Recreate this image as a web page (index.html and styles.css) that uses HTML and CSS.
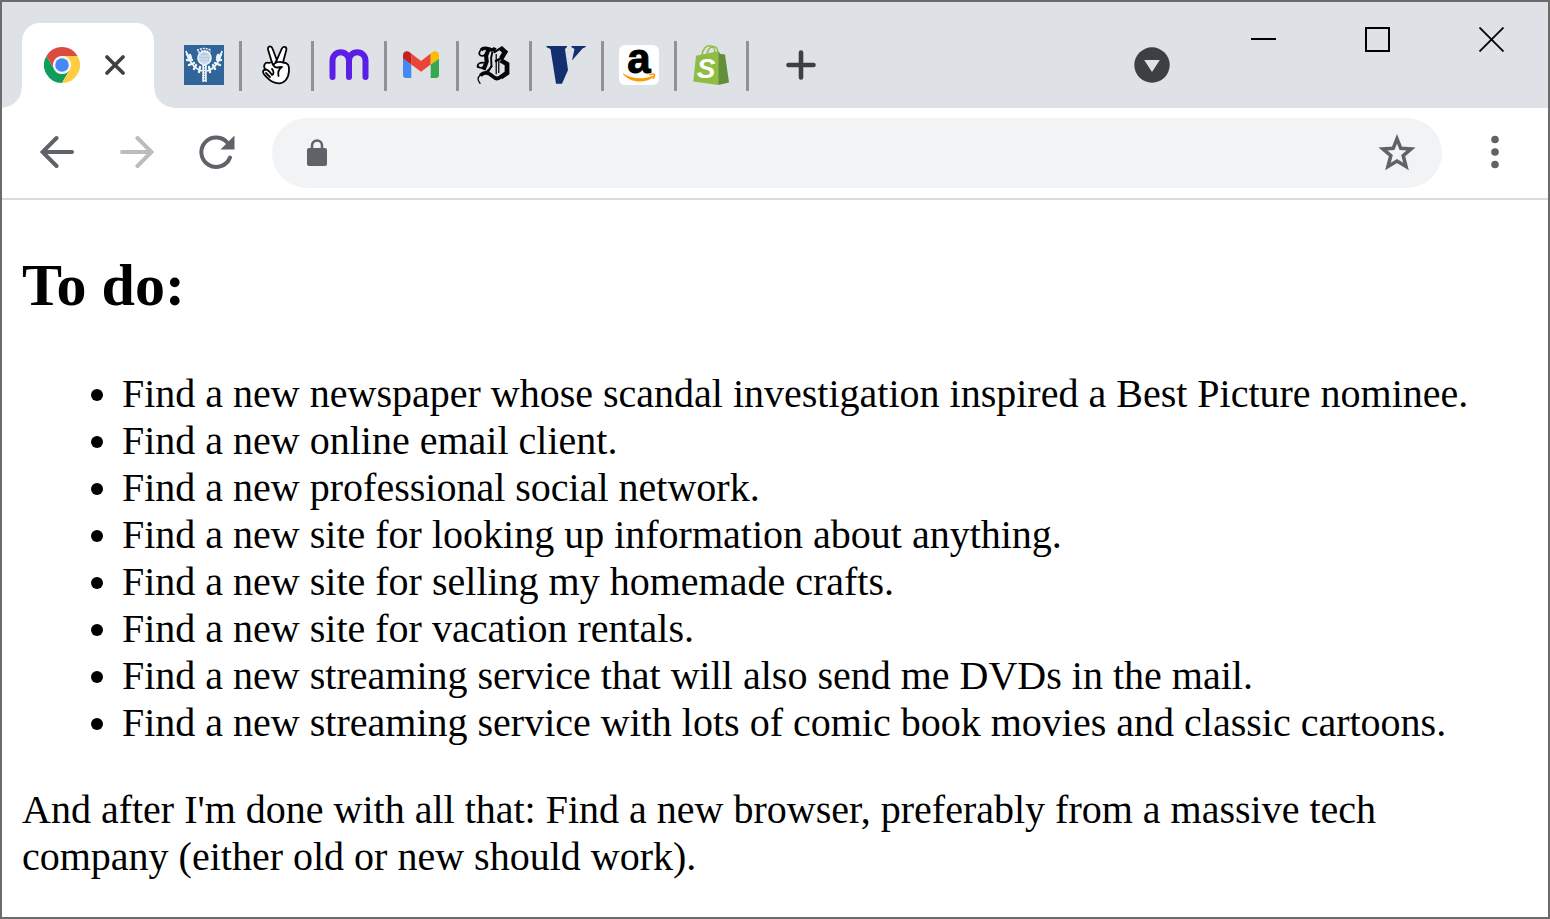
FILE: index.html
```html
<!DOCTYPE html>
<html lang="en">
<head>
<meta charset="utf-8">
<title>To do</title>
<link rel="stylesheet" href="styles.css">
</head>
<body>
<div class="window">
  <header class="tabstrip">
    <div class="tab-active">
      <svg class="chrome-icon" viewBox="0 0 48 48" aria-hidden="true">
        <path fill="#db4c3f" d="M24 12A12 12 0 0 0 13.6 30L3.2 12A24 24 0 0 1 44.8 12Z"/>
        <path fill="#109d59" d="M13.6 30A12 12 0 0 0 34.4 30L24 48A24 24 0 0 1 3.2 12Z"/>
        <path fill="#ffcd42" d="M24 12H44.8A24 24 0 0 1 24 48L34.4 30A12 12 0 0 0 24 12Z"/>
        <circle cx="24" cy="24" r="11.500" fill="#f1f1f1"/>
        <circle cx="24" cy="24" r="9" fill="#4587f4"/>
      </svg>
      <button class="tab-close" aria-label="Close tab">
        <svg width="20" height="20" viewBox="0 0 20 20"><path d="M2 2L18 18M18 2L2 18" stroke="#3c4043" stroke-width="3.600" stroke-linecap="round"/></svg>
      </button>
    </div>
    <nav class="tabs" aria-label="Tabs">
      <button class="tab" aria-label="Encyclopedia">
        <svg class="favicon" viewBox="0 0 40 40">
          <path fill="#316599" d="M0 0H40V40H0Z"/>
          <g fill="none" stroke="#eef3f8">
            <path stroke-width="1.500" stroke-dasharray="2 1" d="M13 5.500Q20 1.500 27.500 5.500M14 7.500Q20 4 26.500 7.500"/>
            <circle cx="20.500" cy="13" r="6.500" fill="#b9cde0" stroke-width="1.600"/>
            <path stroke-width="1" stroke-dasharray="1.500 1" d="M16 11H25M15 14H26M17 17H24"/>
            <path stroke-width="4.500" d="M20.500 19V37"/>
            <path stroke="#316599" stroke-width=".8" stroke-dasharray="1.500 1" d="M20.500 21V37"/>
            <path stroke-width="1.700" d="M18 26Q7 23 2 6M23 26Q34 23 38 6"/>
            <path stroke-width="2.400" stroke-linecap="round" d="M3 9L5 13M3 15L8 15M5 20L10 18M10 24L12 20M15 27L16 22M7 13L6 10M37 9L35 13M37 15L33 15M36 20L31 18M31 24L29 20M26 27L25 22M33 13L34 10"/>
          </g>
        </svg>
      </button>
      <button class="tab" aria-label="AngelList">
        <svg class="favicon" viewBox="0 0 40 40">
          <g stroke="#050505" stroke-width="1.800" stroke-linejoin="round" stroke-linecap="round">
            <path fill="#fff" d="M12 4.500C11.500 .5 15.500 .5 16.500 3.500L20.800 15L25.700 3.800C27 .7 31 1.500 30.300 5L27 17.500C32 18 33.500 20 33 26C32.500 34 28 38.500 22.500 38.300C16 38 13.500 35 9.500 31C6 28 6.500 25 9.500 24.500C6.500 21 9 16.500 13 18L15.800 17Z"/>
            <path fill="none" d="M15.800 17L17 20M20.800 15L19.500 17.500M27 17.500C24 16.500 21 17 18.500 18.500C16.500 20 18 22.500 21 22.500L26 22C23 24 21.500 27 22.500 31M9.500 24.500C12.500 24.500 14.500 28 16 30C18 29 18 26 16 24M10 28L14 32"/>
          </g>
        </svg>
      </button>
      <button class="tab" aria-label="Metro">
        <svg class="favicon" viewBox="0 0 40 40"><path fill="none" stroke="#5b1ee6" stroke-width="6" stroke-linecap="round" d="M3.500 32V15.500A8.200 8.200 0 0 1 20 15.500V32M20 15.500A8.200 8.200 0 0 1 36.500 15.500V32"/></svg>
      </button>
      <button class="tab" aria-label="Gmail">
        <svg class="favicon" viewBox="0 0 40 40">
          <path fill="#4589f5" d="M2 13.500L10.300 19.500V33H5A3 3 0 0 1 2 30Z"/>
          <path fill="#36a853" d="M38 13.500L29.700 19.500V33H35A3 3 0 0 0 38 30Z"/>
          <path fill="#ea4536" d="M10.300 8.500L20 16L29.700 8.500V19.500L20 26.700L10.300 19.500Z"/>
          <path fill="#c5221f" d="M2 13.500V10.200C2 6.300 6.200 5 9 7.400L10.300 8.500V19.500Z"/>
          <path fill="#fbbc05" d="M38 13.500V10.200C38 6.300 33.800 5 31 7.400L29.700 8.500V19.500Z"/>
        </svg>
      </button>
      <button class="tab" aria-label="Newspaper">
        <svg class="favicon" viewBox="0 0 126 126">
          <g fill="none" stroke="#050505">
            <path stroke-width="11" d="M22 16C32 5 44 12 54 15C60 17 64 13 66 8"/>
            <path stroke-width="5" d="M22 15C12 26 16 36 30 34L38 26M12 72C8 60 18 54 32 56"/>
            <path stroke-width="13" d="M45 16L38 34L40 52L30 78"/>
            <path stroke-width="6" d="M58 22L54 40L55 66L44 86M12 66C20 78 32 70 40 62"/>
            <path stroke-width="4" d="M70 28V92M78 44V88"/>
            <path stroke-width="15" d="M84 10L98 22L86 42M84 48L104 60V88L84 102"/>
            <path stroke-width="7" d="M62 24L90 6M66 52L92 38M70 108L108 84"/>
            <path stroke-width="12" d="M20 96C34 82 46 88 58 98C68 107 76 108 84 100"/>
            <path stroke-width="4" d="M22 92C8 104 12 112 20 122M38 84L58 66"/>
          </g>
        </svg>
      </button>
      <button class="tab" aria-label="News site">
        <svg class="favicon" viewBox="0 0 40 40"><path fill="#142f70" d="M.5 1H21V2L19 4L22 25L16 38.700H10L4.500 4L.5 2.200ZM25.500 1H39.700V2L36.500 3.500L26 15.500L28.500 4L25.500 2.200Z"/></svg>
      </button>
      <button class="tab" aria-label="Amazon">
        <svg class="favicon" viewBox="0 0 40 40">
          <rect width="40" height="40" rx="6" fill="#fff"/>
          <text class="amazon-a" x="20" y="28" text-anchor="middle">a</text>
          <path fill="#ff9900" d="M4 28.200C12 34 24 35 33.500 30.700C34.800 30.300 35.200 31.300 34 32.200C26 38.800 11 38 4 29Z"/>
          <path fill="none" stroke="#ff9900" stroke-width="1.500" d="M30 29.700C33 28.800 35.500 28.700 35.600 29.600C35.700 31 35 32.500 33.800 34"/>
        </svg>
      </button>
      <button class="tab" aria-label="Shopify">
        <svg class="favicon" viewBox="0 0 40 40">
          <path fill="none" stroke="#95bf47" stroke-width="1.500" d="M11 10C12 4 15 .8 18.500 .8C22 .8 24 4 24 8M16 9C17 4 20 1.800 22 1.500C25 1.300 26.500 4 27 7"/>
          <path fill="#8fbc42" d="M5 10.800L27.300 6.200V40L2.300 36.500Z"/>
          <path fill="#619038" d="M27.300 6.200L29.500 9L34 9.500L38 37.500L27.300 40Z"/>
          <text class="shopify-s" x="15" y="33" text-anchor="middle">S</text>
        </svg>
      </button>
    </nav>
    <button class="new-tab" aria-label="New tab">
      <svg width="30" height="30" viewBox="0 0 30 30"><path d="M15 2.500V27.500M2.500 15H27.500" stroke="#3c4043" stroke-width="4.600" stroke-linecap="round"/></svg>
    </button>
    <button class="tab-search" aria-label="Search tabs">
      <svg width="36" height="36" viewBox="0 0 36 36"><circle cx="18" cy="18" r="17.700" fill="#3c4043"/><path fill="#dee1e6" d="M10.200 13H25.800L18 25Z"/></svg>
    </button>
    <div class="window-controls">
      <button aria-label="Minimize"><svg width="25" height="25" viewBox="0 0 25 25"><path d="M0 11H25V13H0Z"/></svg></button>
      <button aria-label="Maximize"><svg width="25" height="25" viewBox="0 0 25 25"><path d="M1 1H24V24H1Z" fill="none" stroke="#000" stroke-width="2"/></svg></button>
      <button aria-label="Close"><svg width="25" height="25" viewBox="0 0 25 25"><path d="M.5 .5L24.500 24.500M24.500 .5L.5 24.500" stroke="#000" stroke-width="1.800"/></svg></button>
    </div>
  </header>
  <div class="toolbar">
    <button aria-label="Back"><svg width="34" height="34" viewBox="0 0 34 34"><path d="M32 17H3M16.500 3L2.500 17L16.500 31" fill="none" stroke="#5f6368" stroke-width="4" stroke-linecap="round" stroke-linejoin="miter"/></svg></button>
    <button aria-label="Forward"><svg width="34" height="34" viewBox="0 0 34 34"><path d="M2 17H31M17.500 3L31.500 17L17.500 31" fill="none" stroke="#babcbe" stroke-width="4" stroke-linecap="round" stroke-linejoin="miter"/></svg></button>
    <button aria-label="Reload"><svg width="36" height="36" viewBox="0 0 36 36"><path d="M29 9.300A14.800 14.800 0 1 0 31 23.500" fill="none" stroke="#5f6368" stroke-width="4" stroke-linecap="round"/><path d="M35.500 1.500V15.500H21.500Z" fill="#5f6368"/></svg></button>
    <div class="omnibox">
      <svg width="20" height="28" viewBox="0 0 20 28" aria-hidden="true"><rect y="9" width="20" height="18" rx="2" fill="#5f6368"/><path d="M5 10V6.500A5 5 0 0 1 15 6.500V10" fill="none" stroke="#5f6368" stroke-width="2.500"/></svg>
      <input type="text" aria-label="Address">
      <button aria-label="Bookmark this page"><svg width="38" height="38" viewBox="0 0 38 38"><path d="M19 4.800L22.800 14.300L33 15L25.200 21.600L28 32.500L19 27L10 32.500L12.800 21.600L5 15L15.200 14.300Z" fill="none" stroke="#5f6368" stroke-width="3.600"/></svg></button>
    </div>
    <button class="menu" aria-label="Menu"><svg width="8" height="34" viewBox="0 0 8 34"><g fill="#5f6368"><circle cx="4" cy="4.500" r="3.800"/><circle cx="4" cy="17" r="3.800"/><circle cx="4" cy="29.500" r="3.800"/></g></svg></button>
  </div>
  <main class="page">
    <h2>To do:</h2>
    <ul>
      <li>Find a new newspaper whose scandal investigation inspired a Best Picture nominee.</li>
      <li>Find a new online email client.</li>
      <li>Find a new professional social network.</li>
      <li>Find a new site for looking up information about anything.</li>
      <li>Find a new site for selling my homemade crafts.</li>
      <li>Find a new site for vacation rentals.</li>
      <li>Find a new streaming service that will also send me DVDs in the mail.</li>
      <li>Find a new streaming service with lots of comic book movies and classic cartoons.</li>
    </ul>
    <p>And after I'm done with all that: Find a new browser, preferably from a massive tech company (either old or new should work).</p>
  </main>
</div>
</body>
</html>
```
FILE: styles.css
```css
* {
  box-sizing: border-box;
}

body {
  margin: 0;
  min-height: 100vh;
  padding: 2px;
  display: flex;
  background: #6b6b6c;
  color: #000;
  font-family: "Liberation Serif", "Times New Roman", serif;
}

button {
  border: 0;
  padding: 0;
  background: none;
  display: flex;
  align-items: center;
  justify-content: center;
}

svg {
  display: block;
  flex: none;
}

.window {
  flex: 1;
  min-width: 0;
  display: flex;
  flex-direction: column;
  background: #fff;
}

/* Tab strip */
.tabstrip {
  display: flex;
  align-items: stretch;
  height: 106px;
  padding: 21px 0 0 20px;
  background: #dee1e6;
}

.tab-active {
  position: relative;
  width: 132px;
  padding: 0 29px 2px 22px;
  display: flex;
  align-items: center;
  justify-content: space-between;
  background: #fff;
  border-radius: 18px 18px 0 0;
}

.tab-active::before,
.tab-active::after {
  content: "";
  position: absolute;
  bottom: 0;
  width: 20px;
  height: 20px;
}

.tab-active::before {
  right: 100%;
  background: radial-gradient(circle at 0 0, transparent 19px, #fff 20px);
}

.tab-active::after {
  left: 100%;
  background: radial-gradient(circle at 100% 0, transparent 19px, #fff 20px);
}

.chrome-icon {
  width: 36px;
  height: 36px;
}

.tabs {
  display: grid;
  grid-template-columns: repeat(8, 1fr);
  align-items: center;
  width: 580px;
  margin-left: 15px;
}

.tab {
  height: 50px;
  padding-bottom: 2px;
  border-right: 3px solid #909396;
}

.favicon {
  width: 40px;
  height: 40px;
  overflow: visible;
}

.amazon-a {
  font: bold 42px "Liberation Sans", Arial, sans-serif;
  stroke: #000;
  stroke-width: 1px;
}

.shopify-s {
  font: italic bold 28px "Liberation Sans", Arial, sans-serif;
  fill: #fff;
}

.new-tab {
  width: 104px;
  padding-bottom: 2px;
}

.tab-search {
  width: 36px;
  margin-left: auto;
  padding-bottom: 2px;
}

.window-controls {
  display: flex;
  align-self: flex-start;
  margin: -21px 0 0 36px;
}

.window-controls button {
  width: 114px;
  height: 75px;
}

/* Toolbar */
.toolbar {
  display: flex;
  align-items: center;
  gap: 26px;
  height: 92px;
  padding-left: 28px;
  border-bottom: 2px solid #dadbdc;
}

.toolbar > button {
  width: 54px;
  height: 54px;
  padding-bottom: 2px;
}

.toolbar > .menu {
  margin: 0 26px 0 0;
}

.omnibox {
  flex: 1;
  display: flex;
  align-items: center;
  height: 70px;
  margin-left: 2px;
  padding: 0 26px 0 35px;
  border-radius: 35px;
  background: #f1f3f4;
}

.omnibox input {
  flex: 1;
  min-width: 0;
  border: 0;
  outline: 0;
  padding: 0 20px;
  background: none;
  font: 32px Roboto, sans-serif;
}

/* Page content */
.page {
  padding: 50px 20px 30px;
  font-size: 40px;
  line-height: 47px;
}

.page h2 {
  margin: 0 0 50px;
  font-size: 60px;
  line-height: 70px;
}

.page ul {
  margin: 0 0 40px;
  padding-left: 100px;
}

.page p {
  margin: 0;
}
```
